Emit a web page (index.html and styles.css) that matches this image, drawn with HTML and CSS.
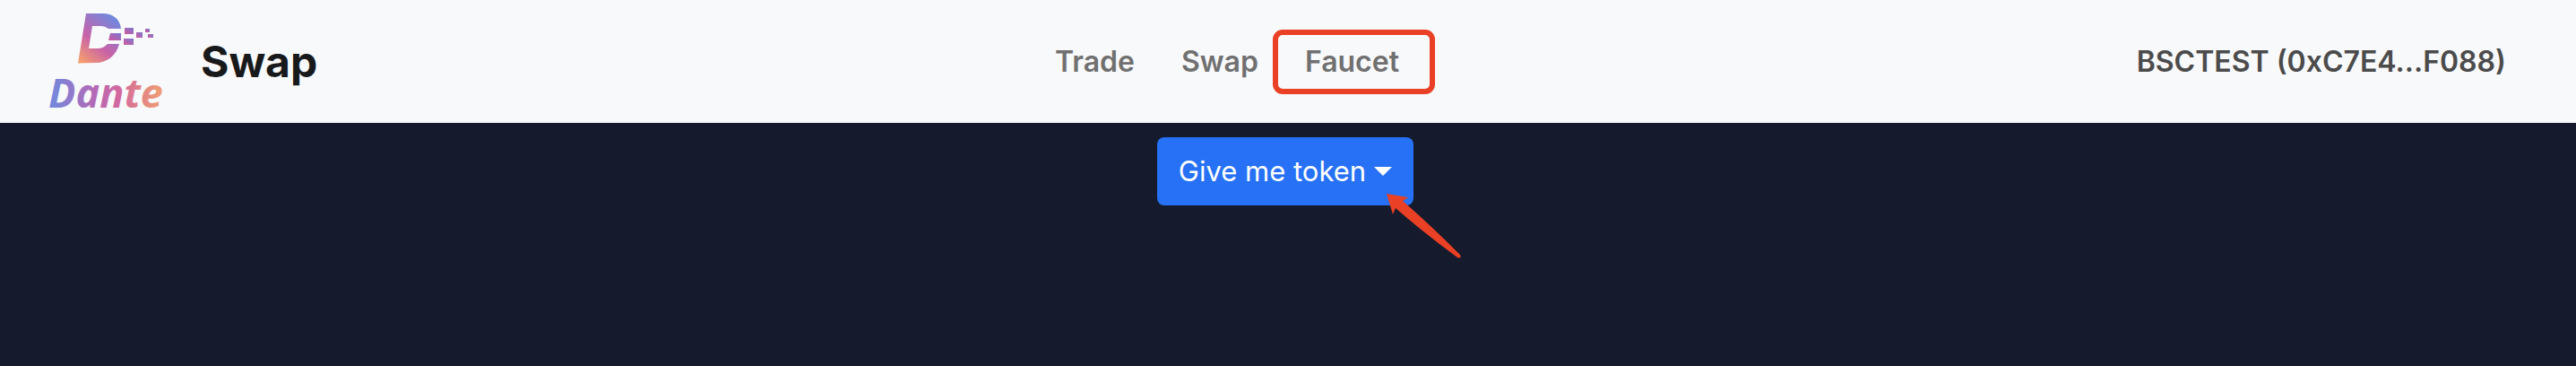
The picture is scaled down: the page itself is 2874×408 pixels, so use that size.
FILE: index.html
```html
<!DOCTYPE html>
<html lang="en">
<head>
<meta charset="utf-8">
<title>Dante Swap</title>
<link rel="stylesheet" href="styles.css">
</head>
<body>
<header class="navbar">
  <a class="brand" href="#">
    <svg class="logo" viewBox="48 0 144 137" role="img" aria-label="Dante">
      <defs>
        <linearGradient id="mark" gradientUnits="userSpaceOnUse" x1="88" y1="68" x2="126" y2="20">
          <stop offset="0" stop-color="#f7a06c"/>
          <stop offset=".45" stop-color="#c862a8"/>
          <stop offset="1" stop-color="#7487dc"/>
        </linearGradient>
        <linearGradient id="pixel" x1="0" y1="1" x2="1" y2="0">
          <stop offset="0" stop-color="#d0589c"/>
          <stop offset="1" stop-color="#7c78d0"/>
        </linearGradient>
        <linearGradient id="word" gradientUnits="userSpaceOnUse" x1="58" y1="0" x2="182" y2="0">
          <stop offset="0" stop-color="#7488dc"/>
          <stop offset=".4" stop-color="#b768b4"/>
          <stop offset=".6" stop-color="#d2689f"/>
          <stop offset="1" stop-color="#f0a070"/>
        </linearGradient>
      </defs>
      <path fill="url(#mark)" d="M96 15H114C126 15 134 21 135 32H121C118 30 116 29 112 29H103L99 54H108C114 54 117 52 120 49H133C130 62 119 70 107 70L87 70.500Z"/>
      <g fill="url(#pixel)">
        <path d="M123 37H135V45H121Z"/>
        <path d="M139 31H149V38H139Z"/>
        <path d="M138 43H149V50H138Z"/>
        <path d="M152 36H159V42H152Z"/>
        <path d="M162 32H167V36H162Z"/>
        <path d="M165 38H171V42H165Z"/>
      </g>
      <text class="wordmark" x="54" y="120" fill="url(#word)">Dante</text>
    </svg>
    <span class="brand-name">Swap</span>
  </a>
  <nav class="nav">
    <a class="nav-link" href="#">Trade</a>
    <a class="nav-link" href="#">Swap</a>
    <a class="nav-link marked" href="#">Faucet</a>
  </nav>
  <span class="account">BSCTEST (0xC7E4...F088)</span>
</header>
<main class="content">
  <div class="dropdown">
    <button class="toggle" type="button" aria-haspopup="true">Give me token<span class="caret"></span></button>
    <svg class="arrow" viewBox="0 0 84 74" aria-hidden="true">
      <path fill="#ea4025" d="M0 0L24 4L18 8Q48 34 82 68Q84 73 79 71Q42 44 10 16L7 23Z"/>
    </svg>
  </div>
</main>
</body>
</html>
```
FILE: styles.css
```css
* { box-sizing: border-box; }

body {
  margin: 0;
  min-height: 100vh;
  background: #151b2c;
  font-family: Inter, "Liberation Sans", sans-serif;
  font-size: 32px;
  line-height: 48px;
}

a { text-decoration: none; }

.navbar {
  display: flex;
  align-items: center;
  padding: 0 78px 0 48px;
  background: #f8f9fb;
}

.brand {
  display: flex;
  align-items: center;
  gap: 32px;
  color: #18191b;
}

.logo {
  display: block;
  width: 144px;
  height: 137px;
  overflow: visible;
}

.wordmark {
  font-family: "Open Sans", sans-serif;
  font-size: 45px;
  font-style: italic;
  font-weight: 700;
}

.brand-name {
  font-size: 48px;
  font-weight: 700;
}

.nav {
  display: flex;
  gap: 20px;
  margin: 0 auto;
}

.nav-link {
  position: relative;
  padding: 8px 16px;
  color: #707070;
  font-weight: 600;
}

.marked::after {
  content: "";
  position: absolute;
  inset: -4px -24px -4px -20px;
  border: 6px solid #ea4025;
  border-radius: 11px;
}

.account {
  color: #4b4b4b;
  font-weight: 600;
}

.content {
  display: flex;
  justify-content: center;
  padding: 16px 6px 16px 0;
}

.dropdown { position: relative; }

.toggle {
  display: flex;
  align-items: center;
  gap: 9px;
  padding: 14px 24px;
  border: 0;
  border-radius: 8px;
  background: #2671f5;
  color: #fff;
  font: inherit;
  font-size: 31px;
}

.caret {
  border: 10px solid transparent;
  border-top-color: #fff;
  border-bottom: 0;
}

.arrow {
  position: absolute;
  top: 63px;
  right: -54px;
  width: 84px;
  height: 74px;
}
```
